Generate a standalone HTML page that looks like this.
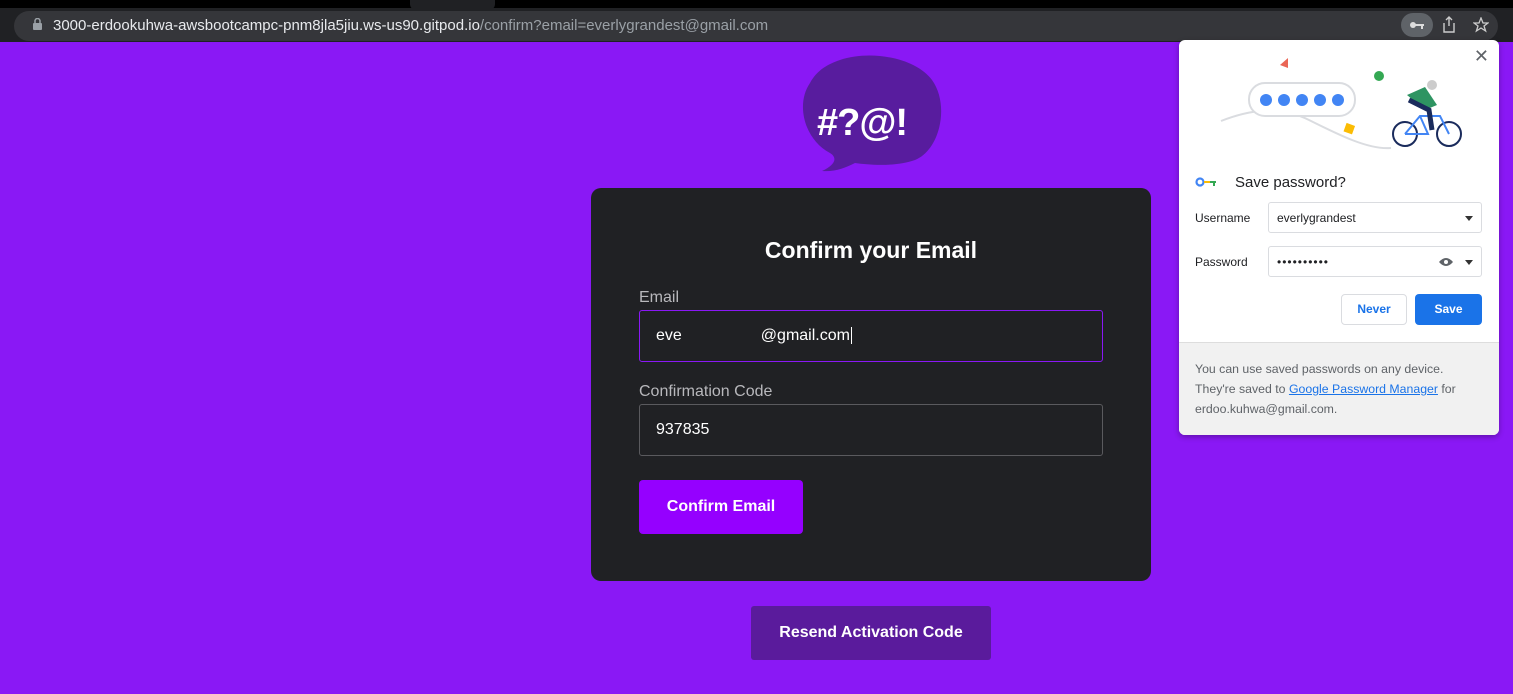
<!DOCTYPE html>
<html><head><meta charset="utf-8"><style>
*{box-sizing:border-box;margin:0;padding:0}
body{width:1513px;height:694px;overflow:hidden;background:#8a18f5;font-family:"Liberation Sans",Arial,sans-serif;position:relative}
.tabs{position:absolute;left:0;top:0;width:1513px;height:10px;background:#000}
.tabs .t{position:absolute;top:0;height:10px;background:#202124;border-radius:0 0 6px 6px}
.bar{position:absolute;left:0;top:8px;width:1513px;height:34px;background:#202124}
.omni{position:absolute;left:14px;top:11px;width:1484px;height:30px;background:#35363a;border-radius:15px}
.url{position:absolute;left:53px;top:17px;font-size:15px;color:#e8eaed;white-space:nowrap}
.url span{color:#9aa0a6}
.card{position:absolute;left:591px;top:188px;width:560px;height:393px;background:#202124;border-radius:10px}
h1{position:absolute;left:0;width:560px;top:49px;text-align:center;color:#fff;font-size:23px;font-weight:bold}
.lbl{position:absolute;left:48px;color:#b8b8bc;font-size:16px}
.inp{position:absolute;left:48px;width:464px;height:52px;border:1px solid #5a5a5e;border-radius:3px;color:#fff;font-size:16px;padding:16px 0 0 16px}
.btn{position:absolute;left:48px;top:292px;width:164px;height:54px;background:#9500ff;border-radius:4px;color:#fff;font-weight:bold;font-size:16px;text-align:center;line-height:54px}
.resend{position:absolute;left:751px;top:606px;width:240px;height:54px;background:#5a1b9c;border-radius:3px;color:#fff;font-weight:bold;font-size:16px;text-align:center;line-height:54px}
.pop{position:absolute;left:1179px;top:40px;width:320px;height:395px;background:#fff;border-radius:6px;box-shadow:0 2px 6px rgba(0,0,0,.3);overflow:hidden;font-size:12px;color:#202124}
.foot{position:absolute;left:0;top:302px;width:320px;height:93px;background:#f1f1f1;border-top:1px solid #ddd;padding:16px 16px;line-height:20px;color:#5f6368;font-size:12.3px}
.foot a{color:#1a73e8;text-decoration:underline}
.f{position:absolute;left:89px;width:214px;height:31px;border:1px solid #dadce0;border-radius:3px;padding:8px 8px;font-size:12px}
.dd{position:absolute;right:8px;top:13px;border-left:4px solid transparent;border-right:4px solid transparent;border-top:5px solid #333}
</style></head><body>
<div class="tabs"><div class="t" style="left:410px;width:85px"></div></div>
<div class="bar"></div>
<div class="omni"></div>
<svg style="position:absolute;left:33px;top:18px" width="9" height="12"><rect x="0" y="5" width="9" height="7" rx="1" fill="#9aa0a6"/><path d="M2 5V3a2.5 2.5 0 0 1 5 0v2" stroke="#9aa0a6" stroke-width="1.5" fill="none"/></svg>
<div class="url">3000-erdookuhwa-awsbootcampc-pnm8jla5jiu.ws-us90.gitpod.io<span>/confirm?email=everlygrandest@gmail.com</span></div>
<div style="position:absolute;left:1401px;top:13px;width:32px;height:24px;border-radius:12px;background:#5f6368"></div>
<svg style="position:absolute;left:1409px;top:19px" width="16" height="12"><circle cx="4" cy="6" r="3" fill="#ddd"/><rect x="6" y="5" width="9" height="2" fill="#ddd"/><rect x="12" y="6" width="2" height="4" fill="#ddd"/></svg>
<svg style="position:absolute;left:1442px;top:16px" width="14" height="18"><path d="M7 1v9M4 4l3-3 3 3M2 7v9h10V7" stroke="#ccc" stroke-width="1.4" fill="none"/></svg>
<svg style="position:absolute;left:1473px;top:17px" width="16" height="16"><path d="M8 1l2 5h5l-4 3 1.6 5L8 11l-4.6 3L5 9 1 6h5z" stroke="#ccc" stroke-width="1.3" fill="none"/></svg>

<svg style="position:absolute;left:800px;top:55px" width="145" height="120">
<path d="M40 5C70 -5 115 2 132 25C150 50 140 95 115 105C95 112 70 110 55 108C45 113 35 117 22 116C35 110 38 103 30 98C5 85 -5 50 10 28C17 15 28 9 40 5Z" fill="#581c9e"/>
<text x="17" y="80" font-family="Liberation Sans" font-weight="bold" font-size="38" fill="#fff" letter-spacing="-1">#?@!</text>
</svg>

<div class="card">
<h1>Confirm your Email</h1>
<div class="lbl" style="top:101px">Email</div>
<div class="inp" style="top:122px;border-color:#8a18f5">eve<span style="display:inline-block;width:79px"></span>@gmail.com<span style="border-left:1px solid #fff;margin-left:1px"></span></div>
<div class="lbl" style="top:195px">Confirmation Code</div>
<div class="inp" style="top:216px">937835</div>
<div class="btn">Confirm Email</div>
</div>
<div class="resend">Resend Activation Code</div>

<div class="pop">
<div style="position:absolute;right:10px;top:6px;font-size:18px;color:#5f6368">✕</div>
<svg style="position:absolute;left:40px;top:15px" width="250" height="100">
<path d="M2 66C30 55 60 50 90 65S150 95 172 93" stroke="#dadce0" stroke-width="2" fill="none"/>
<rect x="30" y="28" width="106" height="33" rx="16" fill="#fff" stroke="#dadce0" stroke-width="2"/>
<g fill="#4285f4"><circle cx="47" cy="45" r="6"/><circle cx="65" cy="45" r="6"/><circle cx="83" cy="45" r="6"/><circle cx="101" cy="45" r="6"/><circle cx="119" cy="45" r="6"/></g>
<path d="M61 10l8 -7v10z" fill="#ea6656"/>
<circle cx="160" cy="21" r="5" fill="#34a853"/>
<rect x="126" y="69" width="9" height="9" fill="#fbbc04" transform="rotate(20 130 73)"/>
<circle cx="186" cy="79" r="12" fill="none" stroke="#1a2b5c" stroke-width="2"/>
<circle cx="230" cy="79" r="12" fill="none" stroke="#1a2b5c" stroke-width="2"/>
<path d="M186 79l15-18h20l9 18M201 61l8 18h-23" stroke="#4285f4" stroke-width="2" fill="none"/>
<path d="M188 40l18-8 12 18-12 5z" fill="#2e9462"/>
<path d="M190 45l20 10 3 20" stroke="#1a2b5c" stroke-width="5" fill="none"/>
<circle cx="213" cy="30" r="5" fill="#ccc"/>
</svg>
<svg style="position:absolute;left:16px;top:136px" width="24" height="12"><circle cx="5" cy="6" r="3.5" fill="none" stroke="#4285f4" stroke-width="2.2"/><rect x="9" y="5" width="6" height="2" fill="#fbbc04"/><rect x="15" y="5" width="6" height="2" fill="#34a853"/><rect x="18" y="6" width="2" height="4" fill="#34a853"/></svg>
<div style="position:absolute;left:56px;top:134px;font-size:15px">Save password?</div>
<div style="position:absolute;left:16px;top:171px">Username</div>
<div class="f" style="top:162px">everlygrandest<div class="dd"></div></div>
<div style="position:absolute;left:16px;top:215px">Password</div>
<div class="f" style="top:206px;letter-spacing:1px">••••••••••<svg style="position:absolute;right:28px;top:10px" width="14" height="10"><path d="M0 5Q7 -3 14 5Q7 13 0 5Z" fill="#5f6368"/><circle cx="7" cy="5" r="2" fill="#fff"/></svg><div class="dd"></div></div>
<div style="position:absolute;left:162px;top:254px;width:66px;height:31px;border:1px solid #dadce0;border-radius:4px;color:#1a73e8;font-weight:bold;text-align:center;line-height:29px">Never</div>
<div style="position:absolute;left:236px;top:254px;width:67px;height:31px;background:#1a73e8;border-radius:4px;color:#fff;font-weight:bold;text-align:center;line-height:31px">Save</div>
<div class="foot">You can use saved passwords on any device.<br>They're saved to <a>Google Password Manager</a> for<br>erdoo.kuhwa@gmail.com.</div>
</div>
</body></html>
